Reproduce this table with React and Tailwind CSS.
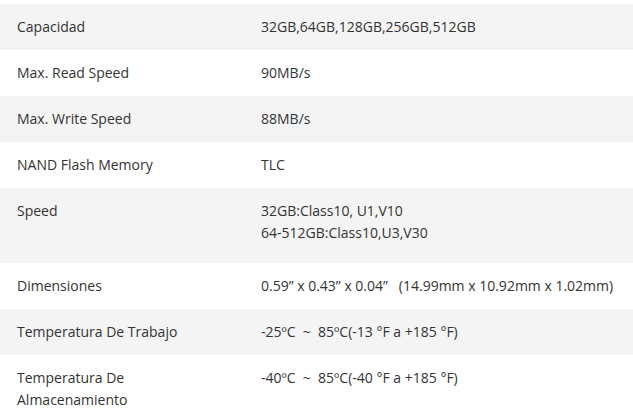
import React from "react";

const rows = [
  ["Capacidad", ["32GB,64GB,128GB,256GB,512GB"]],
  ["Max. Read Speed", ["90MB/s"]],
  ["Max. Write Speed", ["88MB/s"]],
  ["NAND Flash Memory", ["TLC"]],
  ["Speed", ["32GB:Class10, U1,V10", "64-512GB:Class10,U3,V30"]],
  ["Dimensiones", ["0.59\u201d x 0.43\u201d x 0.04\u201d\u00a0\u00a0 (14.99mm x 10.92mm x 1.02mm)"]],
  ["Temperatura De Trabajo", ["-25\u00baC \u00a0~\u00a0 85\u00baC(-13 \u00b0F a +185 \u00b0F)"]],
  ["Temperatura De Almacenamiento", ["-40\u00baC \u00a0~\u00a0 85\u00baC(-40 \u00b0F a +185 \u00b0F)"]],
];

export default function App() {
  return (
    <div className="w-[633px] h-[418px] overflow-hidden bg-white pt-[4px] text-[14px] leading-[22px] text-[#333333] [font-family:'Open_Sans',sans-serif]">
      {rows.map(([label, values], i) => (
        <div
          key={i}
          className={`flex ${i % 2 === 0 ? "bg-[#f4f4f4]" : "bg-white"} ${label === "Speed" ? "pb-[19px]" : "pb-[12px]"} pt-[12px]`}
        >
          <div className="w-[261px] shrink-0 pl-[17px] pr-[60px]">{label}</div>
          <div className="flex-1">
            {values.map((v, j) => (
              <div key={j}>{v}</div>
            ))}
          </div>
        </div>
      ))}
    </div>
  );
}
